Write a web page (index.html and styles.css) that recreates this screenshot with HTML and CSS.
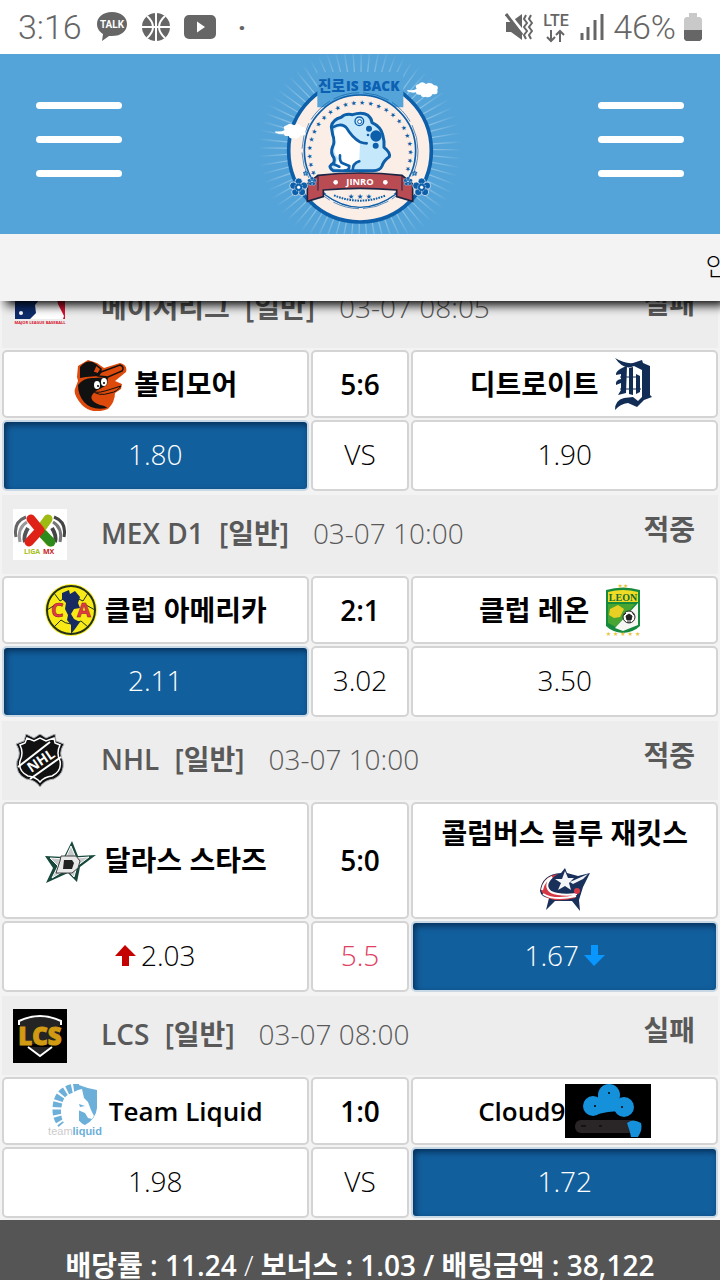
FILE: index.html
```html
<!DOCTYPE html>
<html lang="ko">
  <head>
    <title>진로 IS BACK</title>
    <meta charset="utf-8" />
    <meta name="viewport" content="width=device-width, initial-scale=1.0" />
    <link rel="stylesheet" href="styles.css">
  </head>
  <body>
    <div class="top">
      <div class="status-bar">
        <span class="clock">3:16</span>
        <svg class="talk" viewBox="0 0 32 30" width="32" height="30">
          <path d="M16 0C7 0 1 5 1 12c0 5 3 8 6 10l-1 7 7-5c12 1 18-5 18-12C31 5 25 0 16 0z" fill="#666"/>
          <text x="16" y="16" text-anchor="middle" font-size="10" font-weight="700" fill="#fff">TALK</text>
        </svg>
        <svg viewBox="0 0 28 28" width="28" height="28">
          <circle cx="14" cy="14" r="14" fill="#666"/>
          <path d="M14 0v28M0 14h28M5 3q12 11 0 22M23 3q-12 11 0 22" fill="none" stroke="#fff" stroke-width="2"/>
        </svg>
        <svg viewBox="0 0 32 24" width="32" height="24">
          <rect width="32" height="24" rx="5" fill="#666"/>
          <path d="M13 6.500l8 5.500-8 5.500z" fill="#fff"/>
        </svg>
        <span class="more">·</span>
        <span class="signals">
          <svg viewBox="0 0 28 28" width="28" height="28">
            <path d="M1 9h5l11-8v26L6 19H1z" fill="#666"/>
            <path d="M3 0l16 20" stroke="#fff" stroke-width="3"/>
            <path d="M1 1l16 21" stroke="#666" stroke-width="3"/>
            <path d="M21 2l-2 4 3 4-3 4 3 4-3 4 2 4M26 2l-2 4 3 4-3 4 3 4-3 4 2 4" fill="none" stroke="#666" stroke-width="2"/>
          </svg>
          <svg viewBox="0 0 30 32" width="30" height="32">
            <text x="15" y="15" text-anchor="middle" font-size="16" font-weight="500" fill="#666">LTE</text>
            <path d="M10 19v11M6 26l4 4 4-4M19 31V20M15 24l4-4 4 4" fill="none" stroke="#666" stroke-width="2"/>
          </svg>
          <svg viewBox="0 0 26 28" width="26" height="28">
            <path d="M3 20v7M9 14v13M16 7v20M23 1v26" stroke="#666" stroke-width="3"/>
          </svg>
          <span class="clock">46%</span>
          <svg viewBox="0 0 18 28" width="18" height="28">
            <path d="M5 0h8v4h3l2 2v11H0V6l2-2h3z" fill="#c9c9c9"/>
            <path d="M0 17h18v9l-2 2H2l-2-2z" fill="#666"/>
          </svg>
        </span>
      </div>

      <header class="header">
        <button class="menu" aria-label="메뉴"><i></i><i></i><i></i></button>
        <svg class="brand" viewBox="0 0 660 540" role="img" aria-label="JINRO">
          <defs>
            <radialGradient id="fade" gradientUnits="userSpaceOnUse" cx="330" cy="285" r="305">
              <stop offset="0.6" stop-color="#fff"/>
              <stop offset="1" stop-color="#fff" stop-opacity="0"/>
            </radialGradient>
            <path id="cloud" d="M0 24q20 2 28-4-8-10 6-14Q44-4 56 6q14-8 24 4 16 0 10 14 4 16-14 12-8 14-22 8-12 4-14-6-14 2-14-7-10 3-26-3z" fill="#fff"/>
            <g id="flower" fill="#0e5fa9" stroke="#fff" stroke-width="2">
              <circle cx="0" cy="-17" r="11"/><circle cx="16" cy="-5" r="11"/><circle cx="10" cy="14" r="11"/>
              <circle cx="-10" cy="14" r="11"/><circle cx="-16" cy="-5" r="11"/>
              <circle r="12" stroke-dasharray="3 3"/><circle r="4" fill="#fff"/>
            </g>
            <path id="ring" d="M200 362A145 145 0 1 1 460 362"/>
          </defs>
          <circle cx="330" cy="285" r="200" pathLength="360" fill="none" stroke="url(#fade)" stroke-width="210" stroke-dasharray="0.9 4.1" opacity="0.5"/>
          <circle cx="330" cy="290" r="214" fill="#fbeee6" stroke="#0e5fa9" stroke-width="11"/>
          <path d="M202 54H460V160H202z" fill="#54a4d9"/>
          <circle cx="330" cy="290" r="167" fill="#fbeee6" stroke="#0e5fa9" stroke-width="5"/>
          <circle cx="330" cy="290" r="174" fill="none" stroke="#0e5fa9" stroke-width="2" stroke-dasharray="80 12"/>
          <text x="204" y="112" class="brand-ko">진로</text>
          <text x="288" y="112" class="brand-en">IS BACK</text>
          <text class="brand-stars"><textPath href="#ring">★ ★ ★ ★ ★ ★ ★ ★ ★ ★ ★ ★ ★ ★ ★ ★ ★ ★ ★ ★ ★ ★ ★ ★</textPath></text>
          <use href="#cloud" x="472" y="84"/>
          <use href="#cloud" x="76" y="208"/>

          <!-- frog -->
          <path d="M244 218Q248 196 274 190Q284 178 308 182Q336 172 354 184Q366 194 366 206Q392 218 398 242Q404 262 402 280Q422 296 418 308Q402 318 396 336Q390 350 370 350H250Q234 340 244 332Q256 326 252 312Q240 296 248 278Q256 262 248 242z" fill="#c5e8fb" stroke="#0e5fa9" stroke-width="9" stroke-linejoin="round"/>
          <path d="M252 232Q264 212 284 222Q302 246 330 266L328 316Q312 326 308 346H274L254 342 264 312Q246 296 258 268z" fill="#fff"/>
          <path d="M248 220Q276 204 290 222Q306 250 330 264Q340 268 350 268M270 304q-2 20 8 24l20 8q0 14-14 14M308 348q0-20 20-26M250 330l18 8" fill="none" stroke="#0e5fa9" stroke-width="8" stroke-linecap="round" stroke-linejoin="round"/>
          <circle cx="328" cy="202" r="13" fill="#c5e8fb" stroke="#0e5fa9" stroke-width="4"/>
          <circle cx="329" cy="203" r="6" fill="#fff" stroke="#0e5fa9" stroke-width="3"/>
          <g fill="#0e5fa9"><circle cx="378" cy="246" r="17"/><circle cx="357" cy="224" r="9"/><circle cx="377" cy="275" r="9"/><circle cx="354" cy="243" r="4"/></g>

          <!-- ribbon -->
          <path d="M222 420Q330 500 438 420" fill="#fbeee6" stroke="#0e5fa9" stroke-width="4"/>
          <path d="M172 390L204 364Q330 350 456 364L488 390V442L440 428V408Q330 398 220 408V428L172 442z" fill="#b94b52" stroke="#1d2544" stroke-width="5"/>
          <path d="M204 364v46M456 364v46" stroke="#1d2544" stroke-width="3"/>
          <text x="330" y="394" class="brand-name">JINRO</text>
          <circle cx="257" cy="385" r="7" fill="#fff"/><circle cx="406" cy="385" r="7" fill="#fff"/>
          <path d="M252 424q78 32 156 0" fill="none" stroke="#0e5fa9" stroke-width="6" stroke-dasharray="5 3"/>
          <text x="330" y="434" class="brand-small">★ ★ ★</text>
          <use href="#flower" x="146" y="400"/>
          <use href="#flower" x="515" y="400"/>
          <use href="#flower" transform="translate(186 382) scale(.5)"/>
          <use href="#flower" transform="translate(474 382) scale(.5)"/>
          <use href="#flower" transform="translate(167 358) scale(.3)"/>
          <use href="#flower" transform="translate(494 358) scale(.3)"/>
        </svg>
        <button class="menu" aria-label="내 정보"><i></i><i></i><i></i></button>
      </header>

      <div class="notice"><span>안</span></div>
    </div>

    <main class="list">
      <section class="match">
        <div class="league">
          <svg class="logo" viewBox="0 0 54 54">
            <rect x="2" y="10" width="50" height="27" fill="#0d2c6c"/>
            <path d="M28 10h24v27H44z" fill="#d5122e"/>
            <path d="M22 10h20l3 12 6 12-1 3H17l6-6-1-8 4-5z" fill="#fff"/>
            <circle cx="8" cy="31" r="2" fill="#fff"/>
            <text x="27" y="42" text-anchor="middle" font-size="4" font-weight="700" fill="#d5122e">MAJOR LEAGUE BASEBALL</text>
          </svg>
          <h2>메이저리그 <span>[일반]</span></h2>
          <time>03-07 08:05</time>
          <strong class="result">실패</strong>
        </div>
        <div class="teams">
          <div class="cell">
            <svg class="logo" viewBox="0 0 54 54">
              <path d="M4 20L5 9 15 3l9 3 7 5 16-5q8 2 6 9l-11 9 7 3-1 5-6 4q0 9-7 16-16 6-26-4Q0 38 2 32l3-8z" fill="#dd4a0b"/>
              <path d="M7 21V10q8-9 16-3l6 6-4 6-12 1z" fill="#111"/>
              <path d="M23 8l5 4-3 5-5-2zM28 15L47 8q5 2 2 6l-14 6-10-1z" fill="#dd4a0b" stroke="#111" stroke-width="1.500"/>
              <path d="M5 28q6-8 16-7l14-1-1 8-11 6q-11 8 4 14 6 1 7 3-15 3-23-6-6-7-6-17z" fill="#111"/>
              <path d="M19 33q3 4 13 1l16-5q-4 6-11 7-12 4-18-3z" fill="#dd4a0b" stroke="#111" stroke-width="1"/>
              <ellipse cx="24" cy="28" rx="3" ry="4" fill="#fff"/><ellipse cx="31" cy="25" rx="3" ry="4" fill="#fff"/>
              <circle cx="25" cy="29" r="1"/><circle cx="31" cy="26" r="1"/>
            </svg>
            <b>볼티모어</b>
          </div>
          <div class="cell score"><b>5:6</b></div>
          <div class="cell">
            <b>디트로이트</b>
            <svg class="logo" viewBox="0 0 54 54">
              <path d="M9 1q10 6 18 5l9-3 1 3 7 3v29l2 2-8 3-7 7-9-4q-8 1-13 7 0-10 9-12l9-1 5 4 4-4V13l-8-4q-10 5-19-8z" fill="#122d55"/>
              <path d="M18 10q-9 4-8 8l5-1v5q-6 1-5 6l5-2v7l-3 5 8-2 1-27zM23 11v26l4 1V10zM30 17l4 2v16l-4 2z" fill="#122d55"/>
              <path d="M14 20h20M14 32h21" stroke="#122d55" stroke-width="1"/>
            </svg>
          </div>
        </div>
        <div class="odds">
          <button class="selected">1.80</button>
          <button>VS</button>
          <button>1.90</button>
        </div>
      </section>

      <section class="match">
        <div class="league">
          <svg class="logo" viewBox="0 0 54 54">
            <rect y="1" width="54" height="51" fill="#fff"/>
            <g fill="none" stroke-width="3">
              <path d="M13 9Q0 14 3 29" stroke="#666"/><path d="M14 14Q4 20 7 34" stroke="#999"/><path d="M15 20q-5 8-3 14" stroke="#555" stroke-width="4"/>
              <path d="M41 9q13 5 10 20" stroke="#444"/><path d="M40 14q10 6 7 20" stroke="#777"/><path d="M39 20q5 8 3 14" stroke="#444" stroke-width="4"/>
            </g>
            <path d="M35 11L27 22l10 12" fill="none" stroke="#9dbb12" stroke-width="9" stroke-linecap="round" stroke-linejoin="round"/>
            <path d="M30 26l8 8" stroke="#2f8a1c" stroke-width="9" stroke-linecap="round"/>
            <path d="M18 11l9 11-11 12" fill="none" stroke="#df2218" stroke-width="9" stroke-linecap="round" stroke-linejoin="round"/>
            <text x="11" y="46" font-size="7" font-weight="700" fill="#a8c020">LIGA</text>
            <text x="30" y="46" font-size="7" font-weight="700" fill="#c8201c">MX</text>
          </svg>
          <h2>MEX D1 <span>[일반]</span></h2>
          <time>03-07 10:00</time>
          <strong class="result">적중</strong>
        </div>
        <div class="teams">
          <div class="cell">
            <svg class="logo" viewBox="0 0 54 54">
              <circle cx="27" cy="27" r="26" fill="#fbf02a"/>
              <circle cx="27" cy="27" r="24" fill="#f8ea16" stroke="#23301d" stroke-width="2"/>
              <path d="M10 10l6 8 10-6 13 6 5-8M3 27l8-5M51 27l-9-5M10 44l7-7M44 44l-7-6M17 37q8 7 20 1" fill="none" stroke="#23301d" stroke-width="1"/>
              <path d="M18 10l7-3 1 4 5-3 5 6-2 6 2 5-6 1-3 5 3 5 6 3-5 7-4 5v-9l-4-5 1-5-3-6 1-6-4-4z" fill="#172b62"/>
              <text x="7" y="34" font-size="20" font-weight="700" fill="#e53a45" stroke="#8a2026" stroke-width=".5">C</text>
              <text x="33" y="34" font-size="20" font-weight="700" fill="#e53a45" stroke="#8a2026" stroke-width=".5">A</text>
            </svg>
            <b>클럽 아메리카</b>
          </div>
          <div class="cell score"><b>2:1</b></div>
          <div class="cell">
            <b>클럽 레온</b>
            <svg class="logo" viewBox="0 0 54 54">
              <path d="M10 7q17-5 34 0v36q-6 6-17 7-11-1-17-7z" fill="#168a3c"/>
              <path d="M12 9q15-4 30 0v10H12z" fill="#f0dc25"/>
              <path d="M12 21h27L20 44l-8-4z" fill="#48a532"/>
              <path d="M42 20v22l-15 6-8-3z" fill="#f5f7f3"/>
              <text x="27" y="18" text-anchor="middle" class="leon">LEON</text>
              <path d="M14 26l8-4 6 4-4 8-6 1-5-3z" fill="#e7cf24"/>
              <circle cx="33" cy="34" r="6" fill="#fff" stroke="#222" stroke-width="1"/>
              <path d="M33 31l3 2-1 4h-4l-1-4zM28 32l2-2M38 32l-2-3M31 39h4" fill="#222" stroke="#222" stroke-width="1"/>
              <text x="27" y="5" text-anchor="middle" class="gold-stars">★★</text>
              <text x="27" y="53" text-anchor="middle" class="gold-stars">★ ★ ★ ★ ★</text>
            </svg>
          </div>
        </div>
        <div class="odds">
          <button class="selected">2.11</button>
          <button>3.02</button>
          <button>3.50</button>
        </div>
      </section>

      <section class="match">
        <div class="league">
          <svg class="logo" viewBox="0 0 54 54">
            <path d="M13 0l8 4 6-4 6 4 9-4 1 7 8 3q-6 9-1 17 2 13-9 18-10 1-14 8-4-7-14-8-11-5-9-18 5-8-1-17l8-3z" fill="#111" stroke="#a9afb4" stroke-width="1"/>
            <path d="M14 4l7 3 6-3 6 3 8-3 1 5 5 2q-4 8 0 16 2 10-8 15-8 1-12 6-4-5-12-6-10-5-8-15 4-8 0-16l5-2z" fill="none" stroke="#fff" stroke-width="1.500"/>
            <path d="M5 33L37 8M17 45l31-22" stroke="#fff" stroke-width="2"/>
            <text x="28" y="32" text-anchor="middle" font-size="14" font-weight="700" fill="#fff" transform="rotate(-34 27 27)">NHL</text>
          </svg>
          <h2>NHL <span>[일반]</span></h2>
          <time>03-07 10:00</time>
          <strong class="result">적중</strong>
        </div>
        <div class="teams">
          <div class="cell">
            <svg class="logo" viewBox="0 0 54 54">
              <path d="M28 7l6 15 18-1-16 12-3 15-9-9-22 10 7-15L1 22l19 1z" fill="#16483b"/>
              <path d="M27 12l5 12 13-1-12 9-3 11-7-8-15 9 6-12-8-8 15 1z" fill="#c7c9ca" stroke="#fff" stroke-width="1"/>
              <path d="M17 22h15l4 5-2 7-6 5H12l4-12z" fill="#e8e8e8" stroke="#444" stroke-width="1"/>
              <path d="M20 26h8l2 3-2 6h-9z" fill="#222"/>
            </svg>
            <b>달라스 스타즈</b>
          </div>
          <div class="cell score"><b>5:0</b></div>
          <div class="cell">
            <b>콜럼버스 블루 재킷스</b>
            <svg class="logo" viewBox="0 0 54 54">
              <path d="M2 33q2-17 21-18l4-5 2 5 11 3 12-3-7 14-4 13 1 11-8-10H17L8 52l3-12q-8-1-9-7z" fill="#19305a"/>
              <path d="M3 32q2-14 17-16-16 10-8 17 10 5 28 2l-3 5Q8 47 3 32z" fill="#d63945"/>
              <path d="M4 32q2-10 10-13-9 9-1 15 9 4 26 2M5 36q11 7 33 2" fill="none" stroke="#fff" stroke-width="2"/>
              <path d="M27 13l3 7h6l-5 5 2 7-6-4-7 4 3-7-6-4h7zM32 24l18-8-5 5-10 5z" fill="#f4f5f7"/>
              <circle cx="39" cy="33" r="3" fill="#d63945"/>
            </svg>
          </div>
        </div>
        <div class="odds">
          <button><svg class="arrow" viewBox="0 0 21 21"><path d="M10 0l11 11h-7v10H7V11H0z" fill="#c50000"/></svg>2.03</button>
          <button class="line">5.5</button>
          <button class="selected">1.67<svg class="arrow" viewBox="0 0 21 21"><path d="M10 21L0 10h7V0h7v10h7z" fill="#0a96ff"/></svg></button>
        </div>
      </section>

      <section class="match">
        <div class="league">
          <svg class="logo" viewBox="0 0 54 54">
            <rect width="54" height="54"/>
            <path d="M6 16v-4q21-10 42 0v4M15 38l12 9 12-9" fill="#242424" stroke="#fff" stroke-width="2"/>
            <path d="M7 15h40v20H7z" fill="#242424"/>
            <text x="27" y="36" text-anchor="middle" font-size="24" font-weight="800" fill="#d09a12" stroke="#d09a12" stroke-width="1">LCS</text>
          </svg>
          <h2>LCS <span>[일반]</span></h2>
          <time>03-07 08:00</time>
          <strong class="result">실패</strong>
        </div>
        <div class="teams">
          <div class="cell">
            <svg class="logo" viewBox="0 0 54 54">
              <path d="M28 0q10 4 21 6v18q-1 11-12 17l-6-2V5z" fill="#6cafd9"/>
              <path d="M31 4Q9 4 9 26q0 8 5 14" fill="none" stroke="#6cafd9" stroke-width="9" stroke-dasharray="5 2"/>
              <path d="M34 5l2 9 4 4 3 8 3 6-2 3-4-1-3-5-7-3q-6 6 6 15H17Q8 26 19 14q7-8 15-9z" fill="#fff"/>
              <path d="M31 20l6 2-5 1z" fill="#6cafd9"/>
              <text x="27" y="51" class="liquid">team<tspan>liquid</tspan></text>
            </svg>
            <b class="latin">Team Liquid</b>
          </div>
          <div class="cell score"><b>1:0</b></div>
          <div class="cell joined">
            <b class="latin">Cloud9</b>
            <svg class="logo wide" viewBox="0 0 86 54">
              <rect width="86" height="54"/>
              <rect x="10" y="36" width="62" height="13" rx="6" fill="#2a2526"/>
              <g fill="#1590da"><circle cx="44" cy="11" r="11"/><circle cx="28" cy="22" r="10"/><circle cx="59" cy="23" r="10"/><path d="M33 11h21v16l-11 1-10 2z"/>
              <path d="M62 39q6-5 14 0 2 6-3 14h-7q-1-6-4-14z"/></g>
              <circle cx="44" cy="9" r="1"/><circle cx="30" cy="22" r="1"/><circle cx="57" cy="23" r="1"/>
              <path d="M16 42h5M34 42h3" stroke="#000"/>
            </svg>
          </div>
        </div>
        <div class="odds">
          <button>1.98</button>
          <button>VS</button>
          <button class="selected">1.72</button>
        </div>
      </section>
    </main>

    <footer class="summary">배당률 : 11.24 <span>/</span> 보너스 : 1.03 / 배팅금액 : 38,122</footer>
  </body>
</html>
```
FILE: styles.css
```css
* {
  box-sizing: border-box;
}
body {
  margin: 0;
  background-color: #f3f3f3;
  color: #000;
  font-family: "Open Sans", "Noto Sans CJK KR", sans-serif;
  font-size: 28px;
  line-height: 49px;
  overflow-x: hidden;
}
svg {
  display: block;
  flex-shrink: 0;
}
button {
  border: 0;
  margin: 0;
  padding: 0;
  background: none;
  color: inherit;
  font: inherit;
  cursor: pointer;
}
.top {
  position: relative;
  z-index: 2;
}
.status-bar {
  height: 54px;
  padding: 0 18px;
  display: flex;
  align-items: center;
  gap: 14px;
  background-color: #fff;
  color: #666;
  font-family: Roboto, "Open Sans", sans-serif;
}
.clock {
  font-size: 34px;
  font-weight: 300;
  line-height: 54px;
}
.more {
  margin-left: 8px;
  font-weight: 700;
}
.signals {
  display: flex;
  align-items: center;
  gap: 8px;
  margin-left: auto;
}
.header {
  position: relative;
  z-index: 1;
  height: 180px;
  padding: 0 36px;
  display: flex;
  align-items: center;
  justify-content: space-between;
  background-color: #54a4d9;
}
.menu {
  width: 86px;
  padding-bottom: 10px;
  display: flex;
  flex-direction: column;
  gap: 27px;
}
.menu i {
  height: 7px;
  border-radius: 4px;
  background-color: #fff;
}
.brand {
  width: 220px;
  height: 180px;
}
.brand-ko {
  font: 900 44px "Noto Sans CJK KR", sans-serif;
  fill: #0b60b3;
}
.brand-en {
  font: 800 41px "Open Sans", sans-serif;
  fill: #0b60b3;
}
.brand-stars {
  font: 20px "DejaVu Sans", sans-serif;
  fill: #0e5fa9;
}
.brand-name {
  font: bold 28px "Open Sans", sans-serif;
  fill: #fff;
  text-anchor: middle;
}
.brand-small {
  font: 22px "DejaVu Sans", sans-serif;
  fill: #0e5fa9;
  text-anchor: middle;
}
.notice {
  height: 67px;
  padding-left: 98%;
  overflow: hidden;
  background-color: #f3f3f3;
  box-shadow: 6px 4px 10px #000;
  font-size: 26px;
  font-weight: 300;
  line-height: 64px;
  white-space: nowrap;
}

.list {
  margin-top: -32px;
  padding: 0 2px;
}
.match {
  display: grid;
  gap: 2px;
  margin-bottom: 4px;
}
.match:last-child {
  margin-bottom: 2px;
}
.league {
  height: 79px;
  padding: 0 23px 0 11px;
  display: flex;
  align-items: center;
  background-color: #ededed;
  color: #595959;
}
.league h2,
.league time {
  padding-bottom: 3px;
}
.league h2 {
  margin: 0 24px 0 34px;
  font-size: 28px;
  font-weight: 600;
}
.league h2 span {
  margin-left: 8px;
}
.league time {
  font-weight: 300;
}
.result {
  margin-left: auto;
  padding-bottom: 10px;
  font-weight: 600;
}
.logo {
  width: 54px;
  height: 54px;
}
.logo.wide {
  width: 86px;
}
.teams,
.odds {
  display: grid;
  grid-template-columns: 31fr 10fr 31fr;
  gap: 2px;
}
.cell,
.odds button {
  border: 2px solid #d4d4d4;
  border-radius: 5px;
  background-color: #fff;
}
.cell {
  min-height: 68px;
  padding: 5px 0;
  display: flex;
  flex-wrap: wrap;
  align-items: center;
  align-content: center;
  justify-content: center;
  column-gap: 7px;
}
.cell.joined {
  column-gap: 0;
}
.cell b {
  font-weight: 600;
}
.cell .latin {
  font-size: 26px;
}
.odds button {
  height: 71px;
  padding-bottom: 3px;
  display: flex;
  align-items: center;
  justify-content: center;
  gap: 5px;
  font-weight: 300;
}
.odds .selected {
  border-color: #c9d8e5;
  background-color: #125f9d;
  box-shadow: inset 2px 3px 6px #06305a;
  color: #fff;
}
.odds .line {
  color: #e0405f;
}
.arrow {
  width: 21px;
  height: 21px;
}
.leon {
  font: bold 10px "Liberation Serif", serif;
  fill: #116b31;
}
.gold-stars {
  font: 6px "DejaVu Sans", sans-serif;
  fill: #e8c53a;
}
.liquid {
  font: 11px "Liberation Sans", sans-serif;
  fill: #ccc;
  text-anchor: middle;
}
.liquid tspan {
  font-weight: 700;
  fill: #6cafd9;
}
.summary {
  height: 60px;
  padding-top: 30px;
  overflow: hidden;
  background-color: #555;
  color: #fff;
  font-weight: 600;
  line-height: 30px;
  text-align: center;
}
.summary span {
  font-weight: 300;
}
```
